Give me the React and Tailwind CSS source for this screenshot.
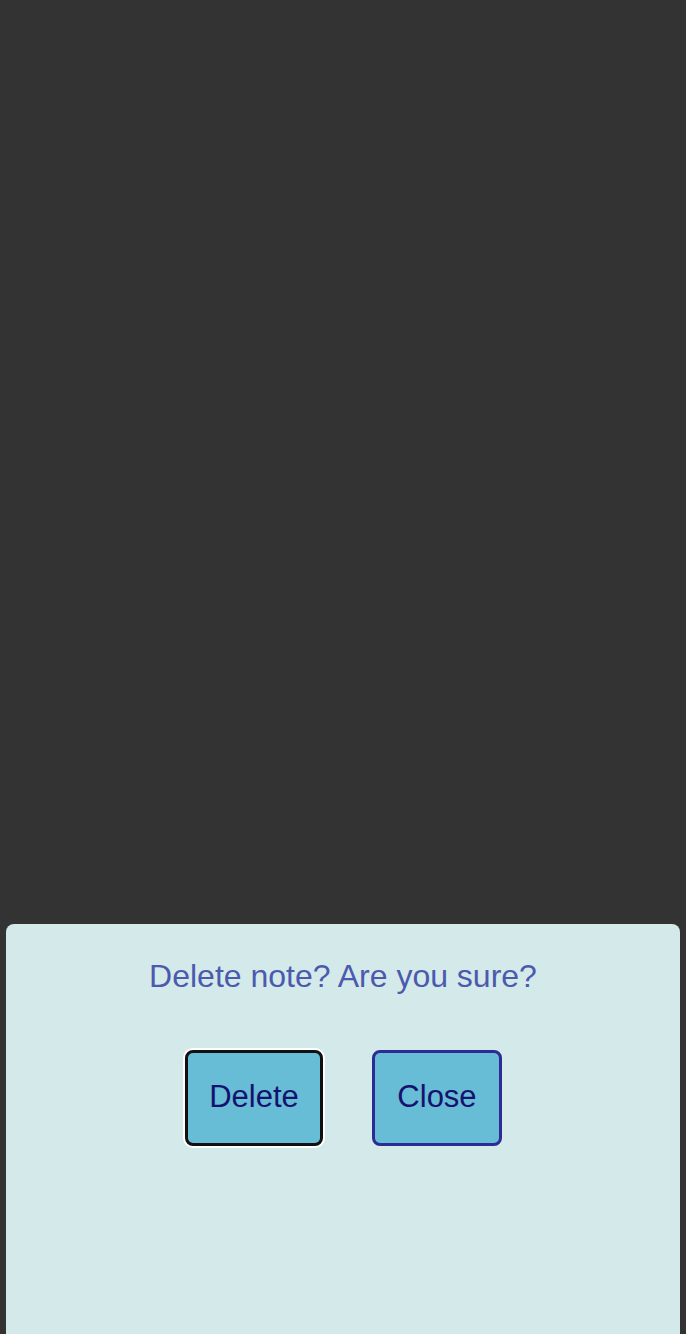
import React from 'react';

const App = () => {
  // confirm sheet at bottom of the page
  return (
    <div className="min-h-screen bg-[#333333] flex flex-col justify-end font-['Liberation_Sans',Arial,sans-serif]">
      <div className="mx-[6px] h-[410px] rounded-t-lg bg-[#d4e9ea] pt-[34px]">
        <h2 className="text-center text-[32px] leading-[37px] text-[#4b5aad]">Delete note? Are you sure?</h2>
        <div className="mt-[55px] flex justify-center gap-[49px] pl-[1px]">
          <button className="h-[96px] w-[138px] pb-[1px] rounded-lg border-[3px] border-[#111111] ring-2 ring-white bg-[#67bcd6] text-[31px] text-[#14126e] flex items-center justify-center">
            Delete
          </button>
          <button className="h-[96px] w-[130px] pb-[1px] rounded-lg border-[3px] border-[#2e2b94] bg-[#67bcd6] text-[31px] text-[#14126e] flex items-center justify-center">
            Close
          </button>
        </div>
      </div>
    </div>
  );
};

export default App;
